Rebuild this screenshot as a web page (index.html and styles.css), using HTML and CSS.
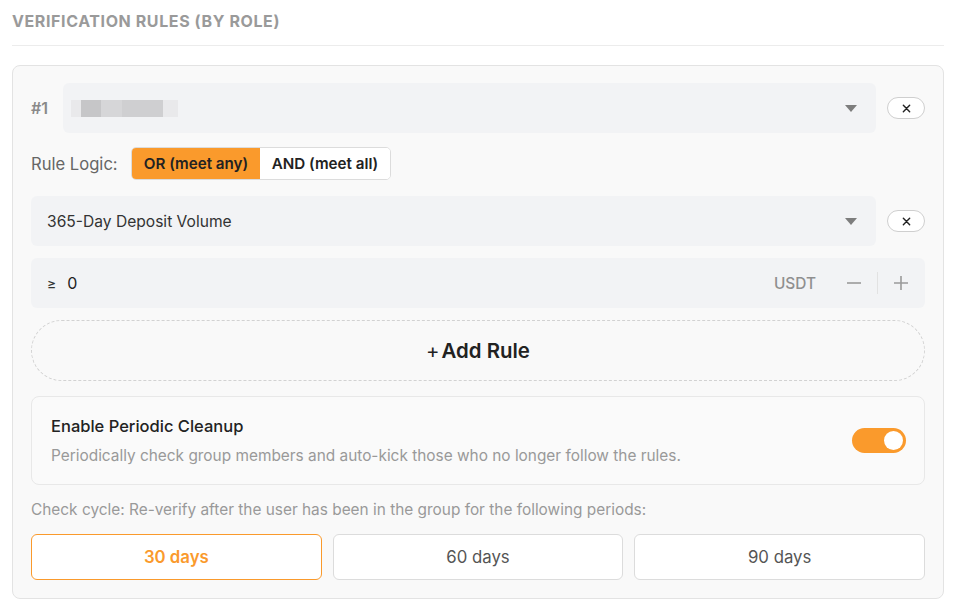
FILE: index.html
```html
<!DOCTYPE html>
<html lang="en">
<head>
<meta charset="utf-8">
<title>Verification Rules</title>
<link rel="stylesheet" href="styles.css">
</head>
<body>
<section class="panel">
  <h2 class="section-title">VERIFICATION RULES (BY ROLE)</h2>
  <div class="card">
    <div class="role-row">
      <span class="role-index">#1</span>
      <div class="select role-select">
        <span class="masked"><i></i><i></i><i></i><i></i><i></i></span>
        <span class="caret"></span>
      </div>
      <button class="remove" aria-label="Remove">
        <svg viewBox="0 0 10 10" width="9" height="9"><path d="M1.5 1.5L8.5 8.5M8.5 1.5L1.5 8.5" stroke="#222" stroke-width="1.6" stroke-linecap="round"/></svg>
      </button>
    </div>

    <div class="logic-row">
      <span class="logic-label">Rule Logic:</span>
      <div class="segmented">
        <button class="seg active">OR (meet any)</button>
        <button class="seg">AND (meet all)</button>
      </div>
    </div>

    <div class="rule-row">
      <div class="select">
        <span class="select-text">365-Day Deposit Volume</span>
        <span class="caret"></span>
      </div>
      <button class="remove" aria-label="Remove">
        <svg viewBox="0 0 10 10" width="9" height="9"><path d="M1.5 1.5L8.5 8.5M8.5 1.5L1.5 8.5" stroke="#222" stroke-width="1.6" stroke-linecap="round"/></svg>
      </button>
    </div>

    <div class="number-input">
      <span class="op">≥</span>
      <span class="value">0</span>
      <span class="unit">USDT</span>
      <button class="step" aria-label="Decrease">
        <svg viewBox="0 0 16 16" width="16" height="16"><path d="M1 8H15" stroke="#9a9a9a" stroke-width="1.6"/></svg>
      </button>
      <span class="step-sep"></span>
      <button class="step" aria-label="Increase">
        <svg viewBox="0 0 16 16" width="16" height="16"><path d="M1 8H15M8 1V15" stroke="#9a9a9a" stroke-width="1.6"/></svg>
      </button>
    </div>

    <button class="add-rule"><span class="plus">+</span>Add Rule</button>

    <div class="cleanup">
      <div class="cleanup-text">
        <div class="cleanup-title">Enable Periodic Cleanup</div>
        <div class="cleanup-desc">Periodically check group members and auto-kick those who no longer follow the rules.</div>
      </div>
      <span class="toggle on"><span class="knob"></span></span>
    </div>

    <p class="cycle-note">Check cycle: Re-verify after the user has been in the group for the following periods:</p>
    <div class="periods">
      <button class="period active">30 days</button>
      <button class="period">60 days</button>
      <button class="period">90 days</button>
    </div>
  </div>
</section>
</body>
</html>
```

FILE: styles.css
```css
* { box-sizing: border-box; }

html, body {
  margin: 0;
  padding: 0;
  background: #ffffff;
}

body {
  font-family: Inter, "Noto Sans", "Liberation Sans", sans-serif;
  color: #222;
}

button {
  font-family: inherit;
  cursor: pointer;
}

.panel {
  padding: 0 13px 0 12px;
}

.section-title {
  margin: 0;
  padding: 11px 0 0;
  height: 46px;
  font-size: 16px;
  line-height: 20px;
  font-weight: 700;
  letter-spacing: 0.6px;
  color: #9a9a9a;
  border-bottom: 1px solid #ececec;
}

.card {
  margin-top: 19px;
  border: 1px solid #e3e3e3;
  border-radius: 8px;
  background: #f9f9f9;
  padding: 17px 18px 18px 18px;
  display: flex;
  flex-direction: column;
}

.role-row,
.rule-row {
  display: flex;
  align-items: center;
}

.role-index {
  width: 32px;
  font-size: 16px;
  font-weight: 600;
  color: #8a8a8a;
}

.select {
  flex: 1;
  height: 50px;
  background: #f2f3f5;
  border-radius: 6px;
  display: flex;
  align-items: center;
  padding: 0 19px 0 16px;
}

.role-select {
  padding-left: 8px;
}

.select-text {
  flex: 1;
  font-size: 15.6px;
  color: #333;
}

/* obscured role name placeholder */
.masked {
  flex: 1;
  display: flex;
  height: 17px;
  align-items: stretch;
}

.masked i {
  display: block;
}

.masked i:nth-child(1) { width: 10px; background: #e9e9eb; }
.masked i:nth-child(2) { width: 20px; background: #c6c6c8; }
.masked i:nth-child(3) { width: 21px; background: #d6d6d8; }
.masked i:nth-child(4) { width: 41px; background: #cfcfd1; }
.masked i:nth-child(5) { width: 15px; background: #e9e9eb; }

.caret {
  width: 0;
  height: 0;
  border-left: 6px solid transparent;
  border-right: 6px solid transparent;
  border-top: 7px solid #7d7d7d;
}

.remove {
  margin-left: 11px;
  width: 38px;
  height: 22px;
  border: 1px solid #cfcfcf;
  border-radius: 11px;
  background: #fff;
  display: flex;
  align-items: center;
  justify-content: center;
  padding: 0;
}

.logic-row {
  display: flex;
  align-items: center;
  margin-top: 14px;
  height: 33px;
}

.logic-label {
  font-size: 16.6px;
  color: #666;
  width: 100px;
}

.segmented {
  display: flex;
  border: 1px solid #dcdcdc;
  border-radius: 5px;
  overflow: hidden;
  background: #fff;
  height: 33px;
}

.seg {
  border: 0;
  background: #fff;
  font-size: 15.2px;
  font-weight: 600;
  color: #222;
  padding: 0;
}

.seg.active {
  background: #fa9a2c;
  width: 128px;
}

.seg:not(.active) {
  width: 130px;
}

.rule-row {
  margin-top: 16px;
}

.number-input {
  margin-top: 12px;
  height: 50px;
  background: #f2f3f5;
  border-radius: 6px;
  display: flex;
  align-items: center;
  padding: 0 16px 0 16px;
}

.op {
  font-size: 14px;
  color: #333;
  margin-right: 11px;
}

.value {
  flex: 1;
  font-size: 16px;
  color: #222;
}

.unit {
  font-size: 15.4px;
  font-weight: 500;
  color: #8f8f8f;
  margin-right: 30px;
}

.step {
  border: 0;
  background: transparent;
  padding: 0;
  width: 16px;
  height: 16px;
  display: flex;
}

.step-sep {
  width: 1px;
  height: 22px;
  background: #e2e2e2;
  margin: 0 15px 0 15px;
}

.add-rule {
  margin-top: 12px;
  height: 61px;
  border: 1px dashed #d2d2d2;
  border-radius: 31px;
  background: transparent;
  font-size: 20.4px;
  font-weight: 600;
  color: #222;
  display: flex;
  align-items: center;
  justify-content: center;
}

.add-rule .plus {
  font-weight: 400;
  margin-right: 2px;
}

.cleanup {
  margin-top: 15px;
  border: 1px solid #e8e8e8;
  border-radius: 8px;
  background: #fafafa;
  height: 89px;
  display: flex;
  align-items: center;
  padding: 0 18px 0 19px;
}

.cleanup-text {
  flex: 1;
}

.cleanup-title {
  font-size: 16.5px;
  line-height: 20px;
  font-weight: 500;
  color: #222;
}

.cleanup-desc {
  margin-top: 10px;
  font-size: 15.4px;
  line-height: 19px;
  color: #999;
}

.toggle {
  width: 54px;
  height: 25px;
  border-radius: 13px;
  background: #ccc;
  position: relative;
  display: block;
}

.toggle.on {
  background: #fa9a2c;
}

.toggle .knob {
  position: absolute;
  top: 3px;
  right: 3px;
  width: 19px;
  height: 19px;
  border-radius: 50%;
  background: #fff;
}

.cycle-note {
  margin: 15px 0 0;
  font-size: 15.4px;
  color: #999;
  line-height: 19px;
}

.periods {
  margin-top: 15px;
  display: grid;
  grid-template-columns: repeat(3, 1fr);
  gap: 11px;
}

.period {
  height: 46px;
  border: 1px solid #dcdcdc;
  border-radius: 6px;
  background: #fff;
  font-size: 16.8px;
  color: #555;
}

.period.active {
  border-color: #fa9a2c;
  color: #fa9a2c;
  font-weight: 600;
}
```
